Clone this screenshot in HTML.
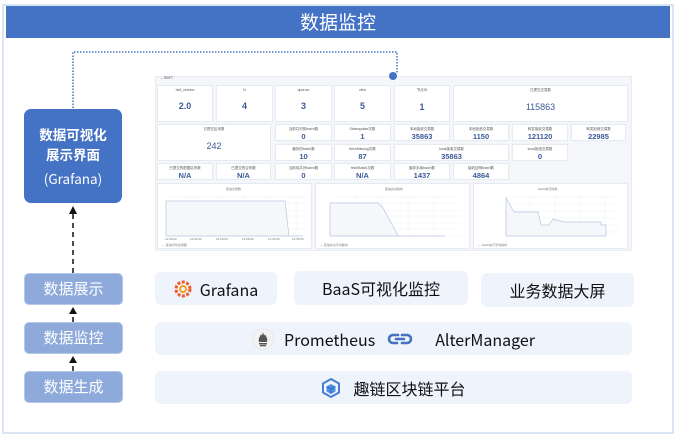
<!DOCTYPE html>
<html><head><meta charset="utf-8"><style>
*{margin:0;padding:0;box-sizing:border-box}
body{width:676px;height:437px;background:#fff;position:relative;overflow:hidden;font-family:"Liberation Sans","Noto Sans CJK SC",sans-serif}
.a{position:absolute}
.frame{left:2px;top:4px;width:672px;height:430px;border:2px solid #dbe4f3}
.hdr{left:6px;top:6px;width:664px;height:32px;background:#4472c4;color:#fff;font-size:19px;text-align:center;line-height:32px;font-family:"Noto Sans CJK SC",sans-serif}
.lb{left:24px;width:99px;height:32px;background:#8eaadb;border:1.5px solid #b4c7e7;border-radius:5px;color:#fff;font-family:"Noto Sans CJK SC",sans-serif;font-size:15px;text-align:center;line-height:29px}
.rb{background:#eef3fc;border-radius:6px;color:#111;font-family:"Noto Sans CJK SC",sans-serif;font-size:16px;display:flex;align-items:center;justify-content:center}
.t{background:#fff;border:1px solid #e6eaf2;text-align:center;color:#3d5a98;font-weight:bold}
.t i{display:block;font-style:normal;font-size:3.5px;color:#555;font-weight:normal;margin-top:2px}
.t b{display:block}
.ch{background:#fff;border:1px solid #e6eaf2}
</style></head><body>
<div class="a frame"></div>
<div class="a hdr">数据监控</div>
<div class="a" style="left:24px;top:109px;width:98px;height:94px;background:#4472c4;border-radius:7px;color:#fff;text-align:center;font-family:'Noto Sans CJK SC',sans-serif;font-size:13.5px;line-height:20px;padding-top:15px;font-weight:bold">数据可视化<br>展示界面<div style="margin-top:4px;font-weight:normal">(Grafana)</div></div>
<div class="a lb" style="top:273px">数据展示</div>
<div class="a lb" style="top:322px">数据监控</div>
<div class="a lb" style="top:371px">数据生成</div>

<div class="a" style="left:155px;top:76px;width:477px;height:175px;background:#f4f6fa;border:1px solid #e8ecf3"></div>
<div class="a" style="left:160px;top:76px;font-size:3.5px;color:#555">⌄ RBFT</div>
<div class="a t" style="left:157px;top:85px;width:56px;height:37px"><i>dcft_version</i><b style="font-size:9px;margin-top:9px">2.0</b></div>
<div class="a t" style="left:216px;top:85px;width:57px;height:37px"><i>N</i><b style="font-size:9px;margin-top:9px">4</b></div>
<div class="a t" style="left:275px;top:85px;width:57px;height:37px"><i>quorum</i><b style="font-size:9px;margin-top:9px">3</b></div>
<div class="a t" style="left:334px;top:85px;width:57px;height:37px"><i>view</i><b style="font-size:9px;margin-top:9px">5</b></div>
<div class="a t" style="left:394px;top:85px;width:56px;height:37px"><i>节点ID</i><b style="font-size:9px;margin-top:9px">1</b></div>
<div class="a t" style="left:453px;top:85px;width:175px;height:37px"><i>已提交交易数</i><b style="font-size:9px;margin-top:9px;font-weight:normal">115863</b></div>
<div class="a t" style="left:157px;top:124px;width:114px;height:37px"><i>已提交区块数</i><b style="font-size:9px;margin-top:9px;font-weight:normal">242</b></div>
<div class="a t" style="left:275px;top:124px;width:57px;height:17px"><i>当前共识的batch数</i><b style="font-size:7.5px">0</b></div>
<div class="a t" style="left:334px;top:124px;width:57px;height:17px"><i>Stateupdate次数</i><b style="font-size:7.5px">1</b></div>
<div class="a t" style="left:394px;top:124px;width:56px;height:17px"><i>本地接收交易数</i><b style="font-size:7.5px">35863</b></div>
<div class="a t" style="left:453px;top:124px;width:56px;height:17px"><i>本地拒绝交易数</i><b style="font-size:7.5px">1150</b></div>
<div class="a t" style="left:512px;top:124px;width:56px;height:17px"><i>转发接收交易数</i><b style="font-size:7.5px">121120</b></div>
<div class="a t" style="left:571px;top:124px;width:55px;height:17px"><i>转发拒绝交易数</i><b style="font-size:7.5px">22985</b></div>
<div class="a t" style="left:275px;top:144px;width:57px;height:17px"><i>缓存的batch数</i><b style="font-size:7.5px">10</b></div>
<div class="a t" style="left:334px;top:144px;width:57px;height:17px"><i>fetchMissing次数</i><b style="font-size:7.5px">87</b></div>
<div class="a t" style="left:394px;top:144px;width:115px;height:17px"><i>local接收交易数</i><b style="font-size:7.5px">35863</b></div>
<div class="a t" style="left:512px;top:144px;width:56px;height:17px"><i>local拒绝交易数</i><b style="font-size:7.5px">0</b></div>
<div class="a t" style="left:157px;top:163px;width:56px;height:17px"><i>已提交的配置区块数</i><b style="font-size:7.5px">N/A</b></div>
<div class="a t" style="left:216px;top:163px;width:55px;height:17px"><i>已提交的空块数</i><b style="font-size:7.5px">N/A</b></div>
<div class="a t" style="left:275px;top:163px;width:57px;height:17px"><i>当前待共识batch数</i><b style="font-size:7.5px">0</b></div>
<div class="a t" style="left:334px;top:163px;width:57px;height:17px"><i>fetchBatch次数</i><b style="font-size:7.5px">N/A</b></div>
<div class="a t" style="left:394px;top:163px;width:56px;height:17px"><i>废弃手续batch数</i><b style="font-size:7.5px">1437</b></div>
<div class="a t" style="left:453px;top:163px;width:56px;height:17px"><i>接收证明batch数</i><b style="font-size:7.5px">4864</b></div>
<div class="a ch" style="left:157px;top:183px;width:155px;height:66px"></div>
<div class="a ch" style="left:315px;top:183px;width:155px;height:66px"></div>
<div class="a ch" style="left:473px;top:183px;width:155px;height:66px"></div>
<svg class="a" style="left:0;top:0" width="676" height="437">
<path d="M73 108 V52 H397 V74" fill="none" stroke="#4472c4" stroke-width="1.5" stroke-dasharray="1.5 1.5"/>
<circle cx="393" cy="76" r="4" fill="#4472c4"/>
<g stroke="#111" stroke-width="1.5" stroke-dasharray="5 4" fill="none">
<path d="M73 273 V214"/><path d="M73 322 V314"/><path d="M73 371 V363"/></g>
<g fill="#111"><path d="M73 206 l-4 8 h8z"/><path d="M73 307 l-4 7 h8z"/><path d="M73 356 l-4 7 h8z"/></g>
<g stroke="#edf0f6" stroke-width="0.5">
<path d="M166 197H305M166 203H305M166 210H305M166 216H305M166 223H305M166 229H305M166 236H305"/>
<path d="M330 197H462M330 203H462M330 210H462M330 216H462M330 223H462M330 229H462M330 236H462"/>
<path d="M505 197H620M505 204H620M505 211H620M505 218H620M505 225H620M505 232H620"/>
<path d="M192 195V236M218 195V236M244 195V236M270 195V236M296 195V236M356 195V236M382 195V236M408 195V236M434 195V236M530 195V236M555 195V236M580 195V236M605 195V236"/></g>
<g fill="#f5f7fb" stroke="#b8c5e0" stroke-width="0.7">
<path d="M166 201H285L289 236H303V236H166Z"/>
<path d="M330 203H378L383 208L394 228L398 236H445V236H330Z"/>
<path d="M506 198L511 207L514 212H538L541 225H549L553 219L564 222H601V225H606V236H506Z"/>
</g>
<g font-size="3" fill="#777" font-family="Liberation Sans">
<text x="226" y="190">区块交易数</text><text x="385" y="190">区块共识耗时</text><text x="538" y="190">batch执行时耗</text>
<text x="162" y="246">— 区块平均交易数</text><text x="320" y="246">— 区块共识平均耗时</text><text x="478" y="246">— batch执行平均耗时</text>
<text x="165" y="240">14:50:00</text><text x="190" y="240">14:52:00</text><text x="216" y="240">14:55:00</text><text x="242" y="240">14:58:00</text><text x="268" y="240">14:56:00</text><text x="292" y="240">14:58:00</text>
</g>
</svg>

<div class="a rb" style="left:155px;top:272px;width:122px;height:33px"><svg width="18" height="18" viewBox="0 0 18 18" style="margin-right:8px"><circle cx="9" cy="9" r="7" fill="none" stroke="#f05a28" stroke-width="3" stroke-dasharray="3 1.5"/><circle cx="9" cy="9" r="3" fill="none" stroke="#f7a11a" stroke-width="2"/></svg>Grafana</div>
<div class="a rb" style="left:294px;top:271px;width:174px;height:34px">BaaS可视化监控</div>
<div class="a rb" style="left:481px;top:273px;width:153px;height:34px">业务数据大屏</div>
<div class="a rb" style="left:155px;top:322px;width:477px;height:33px"><svg width="22" height="22" viewBox="0 0 22 22" style="margin-right:10px"><circle cx="11" cy="11" r="10.5" fill="#f2f2f2" stroke="#ddd" stroke-width="0.5"/><path d="M7 14 C6 10 8 9 9 6 C9.5 8 10 8 11 4 C12 8 12.5 8 13 6 C14 9 16 10 15 14Z" fill="#555"/><rect x="7" y="15" width="8" height="1.5" fill="#555"/><rect x="8" y="17" width="6" height="1.3" fill="#555"/></svg>Prometheus<svg width="26" height="14" viewBox="0 0 26 14" style="margin:0 22px 0 12px"><path d="M11 3H6a4 4 0 0 0 0 8h4M15 3h5a4 4 0 0 1 0 8h-5M9 7h8" fill="none" stroke="#4472c4" stroke-width="2.6" stroke-linecap="round"/></svg>AlterManager</div>
<div class="a rb" style="left:155px;top:371px;width:477px;height:33px"><svg width="20" height="22" viewBox="0 0 20 22" style="margin-right:12px"><path d="M10 2L18 6.5V15.5L10 20L2 15.5V6.5Z" fill="none" stroke="#4a7fd0" stroke-width="2"/><path d="M10 7L14.5 9.5V14.5L10 17L5.5 14.5V9.5Z" fill="#4a90e2"/><path d="M5.5 9.5L10 12L14.5 9.5M10 12V17" stroke="#2a64b8" stroke-width="0.8" fill="none"/></svg>趣链区块链平台</div>
</body></html>
